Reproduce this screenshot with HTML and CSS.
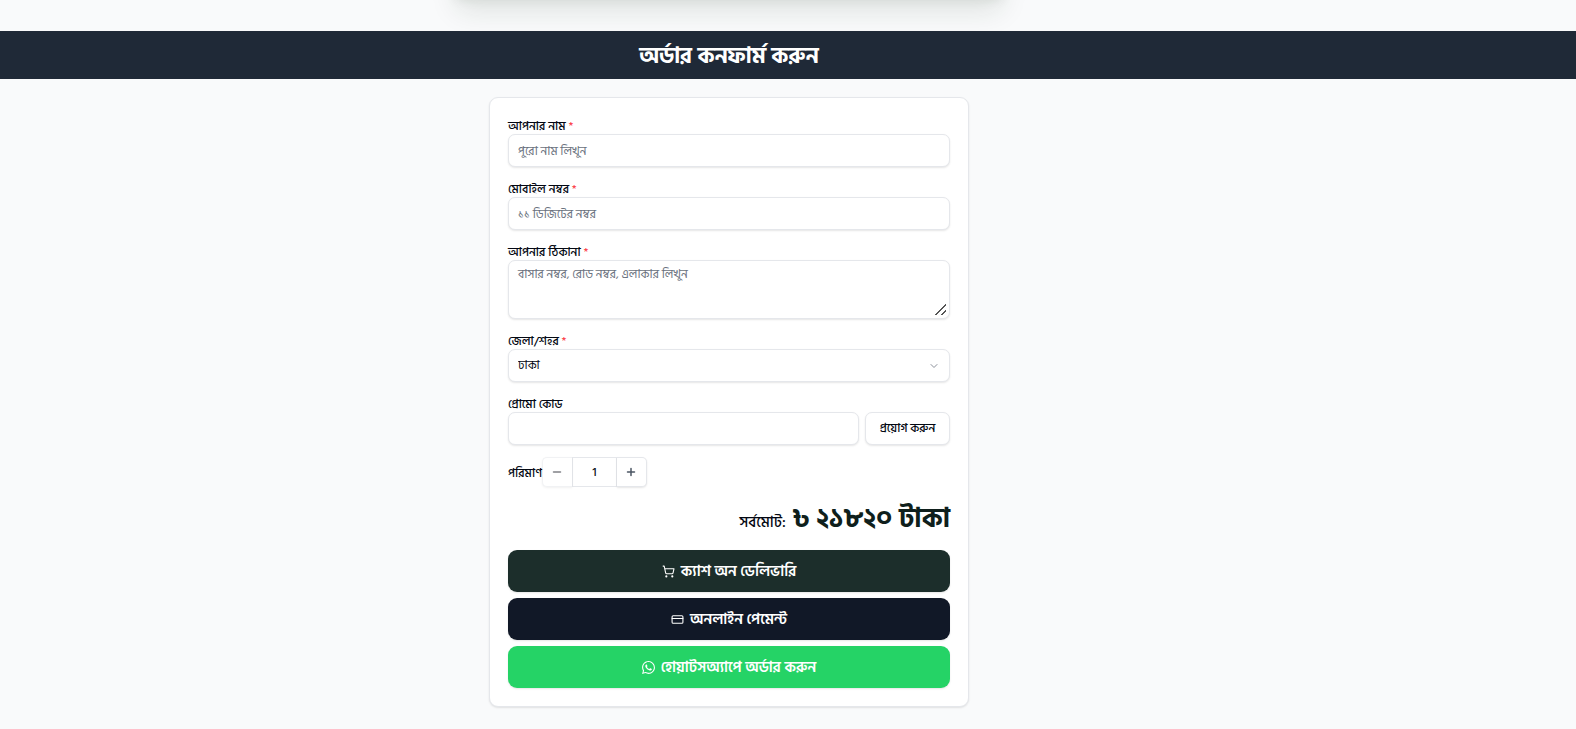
FILE: index.html
```html
<!DOCTYPE html>
<html lang="bn">
<head>
<meta charset="utf-8">
<meta name="viewport" content="width=device-width, initial-scale=1">
<title>অর্ডার কনফার্ম করুন</title>
<link rel="stylesheet" href="styles.css">
</head>
<body>
<div class="preview-edge"><div class="preview-shadow"></div></div>
<header class="banner"><h1>অর্ডার কনফার্ম করুন</h1></header>
<main class="page">
<form class="card">
  <div class="field">
    <label for="name">আপনার নাম <span class="req">*</span></label>
    <input class="control" id="name" type="text" placeholder="পুরো নাম লিখুন">
  </div>
  <div class="field">
    <label for="phone">মোবাইল নম্বর <span class="req">*</span></label>
    <input class="control" id="phone" type="tel" placeholder="১১ ডিজিটের নম্বর">
  </div>
  <div class="field">
    <label for="address">আপনার ঠিকানা <span class="req">*</span></label>
    <textarea class="control area" id="address" placeholder="বাসার নম্বর, রোড নম্বর, এলাকার লিখুন"></textarea>
  </div>
  <div class="field">
    <label for="city">জেলা/শহর <span class="req">*</span></label>
    <div class="select-wrap">
      <select class="control" id="city"><option>ঢাকা</option></select>
      <svg class="chevron" viewBox="0 0 24 24"><path d="m6 9 6 6 6-6"/></svg>
    </div>
  </div>
  <div class="field">
    <label for="promo">প্রোমো কোড</label>
    <div class="promo">
      <input class="control" id="promo" type="text">
      <button class="apply" type="button">প্রয়োগ করুন</button>
    </div>
  </div>
  <div class="quantity">
    <label for="qty">পরিমাণ</label>
    <button class="step minus" type="button" disabled aria-label="কমান"><svg viewBox="0 0 24 24"><path d="M5 12h14"/></svg></button>
    <input class="count" id="qty" type="text" inputmode="numeric" value="1">
    <button class="step plus" type="button" aria-label="বাড়ান"><svg viewBox="0 0 24 24"><path d="M5 12h14M12 5v14"/></svg></button>
  </div>
  <div class="total"><span>সর্বমোট:</span><strong>৳ ২১৮২০ টাকা</strong></div>
  <div class="actions">
    <button class="action cash" type="button">
      <svg viewBox="0 0 24 24"><circle cx="8" cy="21" r="1"/><circle cx="19" cy="21" r="1"/><path d="M2.05 2.05h2l2.66 12.42a2 2 0 0 0 2 1.58h9.78a2 2 0 0 0 1.95-1.57l1.65-7.43H5.12"/></svg>
      ক্যাশ অন ডেলিভারি
    </button>
    <button class="action online" type="button">
      <svg viewBox="0 0 24 24"><rect width="20" height="14" x="2" y="5" rx="2"/><path d="M2 10h20"/></svg>
      অনলাইন পেমেন্ট
    </button>
    <button class="action whatsapp" type="button">
      <svg class="solid" viewBox="0 0 24 24"><path d="M17.472 14.382c-.297-.149-1.758-.867-2.03-.967-.273-.099-.471-.148-.67.15-.197.297-.767.966-.94 1.164-.173.199-.347.223-.644.075-.297-.15-1.255-.463-2.39-1.475-.883-.788-1.48-1.761-1.653-2.059-.173-.297-.018-.458.13-.606.134-.133.298-.347.446-.52.149-.174.198-.298.298-.497.099-.198.05-.371-.025-.52-.075-.149-.669-1.612-.916-2.207-.242-.579-.487-.5-.669-.51-.173-.008-.371-.01-.57-.01-.198 0-.52.074-.792.372-.272.297-1.04 1.016-1.04 2.479 0 1.462 1.065 2.875 1.213 3.074.149.198 2.096 3.2 5.077 4.487.709.306 1.262.489 1.694.625.712.227 1.36.195 1.871.118.571-.085 1.758-.719 2.006-1.413.248-.694.248-1.289.173-1.413-.074-.124-.272-.198-.57-.347m-5.421 7.403h-.004a9.87 9.87 0 0 1-5.031-1.378l-.361-.214-3.741.982.998-3.648-.235-.374a9.86 9.86 0 0 1-1.51-5.26c.001-5.45 4.436-9.884 9.888-9.884 2.64 0 5.122 1.03 6.988 2.898a9.825 9.825 0 0 1 2.893 6.994c-.003 5.45-4.437 9.884-9.885 9.884m8.413-18.297A11.815 11.815 0 0 0 12.05 0C5.495 0 .16 5.335.157 11.892c0 2.096.547 4.142 1.588 5.945L.057 24l6.305-1.654a11.882 11.882 0 0 0 5.683 1.448h.005c6.554 0 11.89-5.335 11.893-11.893a11.821 11.821 0 0 0-3.48-8.413Z"/></svg>
      হোয়াটসঅ্যাপে অর্ডার করুন
    </button>
  </div>
</form>
</main>
</body>
</html>
```
FILE: styles.css
```css
* { box-sizing: border-box; }
body {
  --gutter: 118px;
  margin: 0;
  background: #f9fafb;
  color: #030712;
  font-family: "Hind Siliguri", "Noto Sans Bengali", "Noto Sans", sans-serif;
  font-size: 12px;
  line-height: 18px;
}
button, input, select, textarea { font: inherit; color: inherit; }
svg { fill: none; stroke: currentColor; stroke-width: 2; stroke-linecap: round; stroke-linejoin: round; }
.preview-edge { height: 31px; padding-right: var(--gutter); overflow: hidden; }
.preview-shadow {
  width: 560px;
  height: 80px;
  margin: -80px auto 0;
  box-shadow: 0 18px 28px -8px rgb(26 46 26 / 12%), 0 6px 10px -6px rgb(26 46 26 / 8%);
}
.banner {
  display: flex;
  align-items: center;
  justify-content: center;
  height: 48px;
  padding: 2px var(--gutter) 0 0;
  background: #1f2937;
  color: #fff;
}
.banner h1 { margin: 0; font-size: 22px; line-height: 32px; font-weight: 700; }
.page { padding: 18px var(--gutter) 22px 0; }
.card {
  display: flex;
  flex-direction: column;
  gap: 12px;
  max-width: 480px;
  margin: 0 auto;
  padding: 18px;
  border: 1px solid #e5e7eb;
  border-radius: 9px;
  background: #fff;
  box-shadow: 0 1px 2px rgb(0 0 0 / 10%);
}
.field { display: flex; flex-direction: column; }
.field label, .quantity label {
  padding-top: 4px;
  line-height: 14px;
  font-weight: 500;
  white-space: nowrap;
}
.req { color: #fb2c36; font-weight: 400; }
.control {
  width: 100%;
  height: 33px;
  padding: 4px 9px 3px;
  border: 1px solid #e5e7eb;
  border-radius: 7px;
  background: #fff;
  box-shadow: 0 1px 2px rgb(0 0 0 / 10%);
}
.control::placeholder { color: #6b7280; opacity: 1; }
.area { display: block; height: 59px; padding-top: 5px; resize: vertical; }
.area::-webkit-resizer {
  background: linear-gradient(135deg, transparent 48%, #555 48% 57%, transparent 57% 73%, #555 73% 82%, transparent 82%) 1px 1px / 11px 11px no-repeat;
}
.select-wrap { position: relative; }
.select-wrap select { display: block; appearance: none; padding-top: 3px; }
.chevron {
  position: absolute;
  right: 10px;
  top: 11px;
  width: 12px;
  height: 12px;
  color: #8b909a;
  pointer-events: none;
}
.promo { display: flex; gap: 6px; }
.promo .control { flex: 1; min-width: 0; }
.apply {
  width: 85px;
  padding: 0;
  border: 1px solid #e5e7eb;
  border-radius: 7px;
  background: #fff;
  box-shadow: 0 1px 2px rgb(0 0 0 / 10%);
  font-weight: 500;
  white-space: nowrap;
}
.quantity { display: flex; align-items: center; height: 30px; }
.quantity label { width: 34px; }
.step {
  display: grid;
  place-items: center;
  width: 30px;
  height: 30px;
  padding: 0;
  border: 1px solid #e5e7eb;
  background: #fff;
  box-shadow: 0 1px 2px rgb(0 0 0 / 10%);
}
.step svg { width: 12px; height: 12px; stroke-width: 3; }
.minus { border-radius: 5px 0 0 5px; border-right: 0; padding-right: 1px; opacity: .5; }
.plus { border-radius: 0 5px 5px 0; border-left: 0; padding-right: 2px; color: #4b5563; }
.count {
  width: 45px;
  height: 30px;
  padding: 0;
  border: 1px solid #e5e7eb;
  text-align: center;
  font-weight: 500;
  background: #fff;
}
.total {
  display: flex;
  align-items: baseline;
  justify-content: flex-end;
  gap: 7px;
  height: 39px;
  padding-top: 2px;
  font-size: 15px;
  line-height: 37px;
  font-weight: 500;
}
.total strong { color: #0f1f1c; font-size: 27px; font-weight: 700; }
.actions { display: flex; flex-direction: column; gap: 6px; }
.action {
  display: flex;
  align-items: center;
  justify-content: center;
  gap: 6px;
  height: 42px;
  padding: 1px 12px 0;
  border: 0;
  border-radius: 9px;
  color: #fff;
  font-size: 15px;
  line-height: 20px;
  font-weight: 600;
  box-shadow: 0 1px 2px rgb(0 0 0 / 10%);
}
.action svg { width: 13px; height: 13px; }
.action .solid { fill: currentColor; stroke: none; }
.cash { background: #1c2e2b; }
.online { background: #111827; }
.whatsapp { background: #25d366; }
```
